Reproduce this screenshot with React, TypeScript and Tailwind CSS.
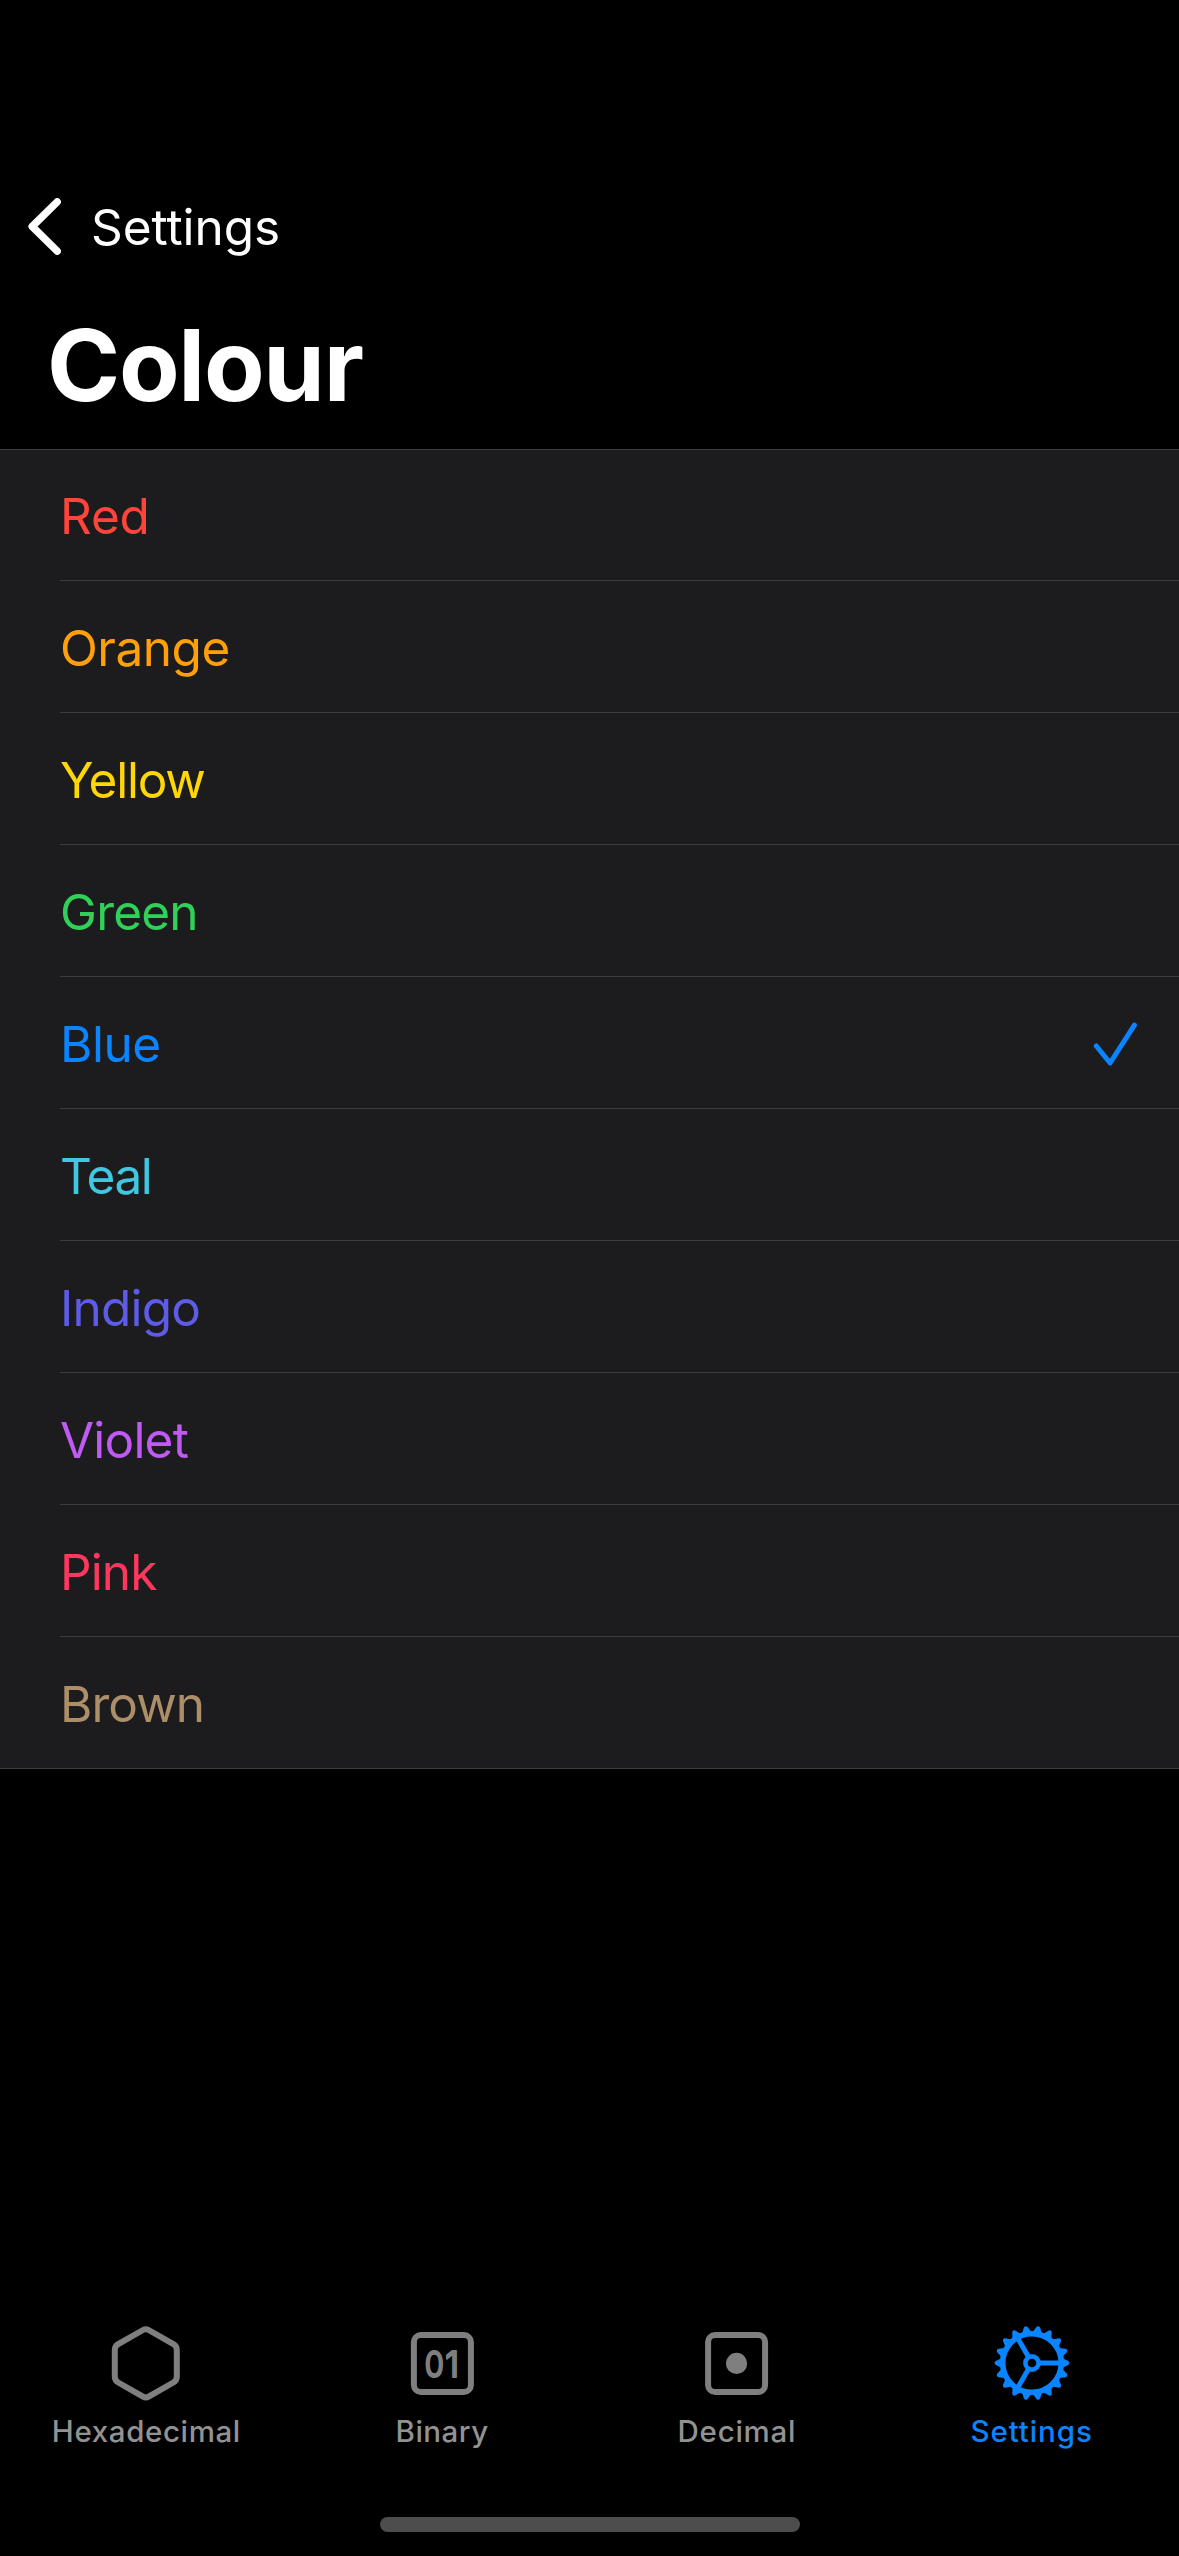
import type { ReactNode } from "react";
import clsx from "clsx";

const COLOURS = [
  { name: "Red", style: "text-[#ff453a] tracking-[-0.2px]" },
  { name: "Orange", style: "text-[#ff9f0a] tracking-[-0.5px]" },
  { name: "Yellow", style: "text-[#ffd60a] tracking-[-1.25px]" },
  { name: "Green", style: "text-[#30d158] tracking-[-0.8px]" },
  { name: "Blue", style: "text-[#0a84ff] tracking-[-0.5px]" },
  { name: "Teal", style: "text-[#40c8e0] tracking-[-1.5px]" },
  { name: "Indigo", style: "text-[#5e5ce6] tracking-[-0.8px]" },
  { name: "Violet", style: "text-[#bf5af2] tracking-[-0.8px]" },
  { name: "Pink", style: "text-[#ff375f] tracking-[-0.9px]" },
  { name: "Brown", style: "text-[#ac8e68] tracking-[-0.95px]" },
];

const SELECTED = "Blue";

function ChevronIcon() {
  return (
    <svg className="h-[57px] w-[33px]" viewBox="0 0 33 57" fill="none" stroke="currentColor" strokeWidth="7.4" strokeLinecap="round" strokeLinejoin="round">
      <path d="M29.2 3.8 4.2 28.5 29.2 53.2" />
    </svg>
  );
}

function CheckIcon() {
  return (
    <svg className="mt-2 h-[44px] w-[44px] text-[#0a84ff]" viewBox="0 0 44 44" fill="none" stroke="currentColor" strokeWidth="5" strokeLinecap="round" strokeLinejoin="round">
      <path d="M3.3 24 17.1 41 41.4 3.2" />
    </svg>
  );
}

function HexagonIcon() {
  return (
    <svg className="h-[76px] w-[76px]" viewBox="1.2 -0.3 76 76" fill="none" stroke="currentColor" strokeWidth="6">
      <path d="M40.8 4.7 65.6 18.8Q69 20.8 69 24.5V51.5Q69 55.2 65.6 57.2L40.8 71.3Q38 72.9 35.2 71.3L10.4 57.2Q7 55.2 7 51.5V24.5Q7 20.8 10.4 18.8L35.2 4.7Q38 3.1 40.8 4.7Z" />
    </svg>
  );
}

function BinaryIcon() {
  return (
    <svg className="h-[76px] w-[76px]" viewBox="0 0 76 76">
      <rect x="9.9" y="10" width="57" height="57" rx="7" fill="none" stroke="currentColor" strokeWidth="6" />
      <g className="font-['Inter',sans-serif] text-[36px] font-normal" fill="currentColor" stroke="currentColor" strokeWidth="1.8" strokeLinejoin="round">
        <text transform="translate(20.4 51.6) scale(0.86 1)">0</text>
        <text transform="translate(41.2 51.6) scale(0.94 1)">1</text>
      </g>
    </svg>
  );
}

function DecimalIcon() {
  return (
    <svg className="h-[76px] w-[76px]" viewBox="0 0 76 76">
      <rect x="9.1" y="10" width="57" height="57" rx="7" fill="none" stroke="currentColor" strokeWidth="6" />
      <circle cx="37.6" cy="38.4" r="10.6" fill="currentColor" />
    </svg>
  );
}

const TEETH = Array.from({ length: 18 }, (_, i) => i * 20);
const SPOKES = [0, 120, 240];

function GearIcon() {
  return (
    <svg className="h-[76px] w-[76px]" viewBox="-38 -38 76 76" fill="none" stroke="currentColor">
      <circle r="29.3" strokeWidth="5.6" />
      <circle r="6.6" strokeWidth="4.6" />
      {SPOKES.map((a) => (
        <path key={a} d="M7.5 0H28" strokeWidth="5" transform={`rotate(${a})`} />
      ))}
      {TEETH.map((a) => (
        <path key={a} d="M31-4.6 36.2-1.9Q37.4-1.2 37.4 0T36.2 1.9L31 4.6Z" fill="currentColor" stroke="none" transform={`rotate(${a})`} />
      ))}
    </svg>
  );
}

function Tab({ label, icon, labelStyle, active = false }: { label: string; icon: ReactNode; labelStyle: string; active?: boolean }) {
  return (
    <button className={clsx("flex flex-1 flex-col items-center", active ? "text-[#0a84ff]" : "text-[#7f7f7f]")}>
      {icon}
      <span className={clsx("mt-[12px] text-[29.5px] leading-[36px] font-medium", labelStyle, !active && "text-[#929292]")}>{label}</span>
    </button>
  );
}

export default function App() {
  return (
    <div className="flex h-[2556px] w-[1179px] flex-col bg-black font-['Inter',sans-serif] text-white">
      <header className="pt-[198px]">
        <button className="ml-[28px] flex h-[57px] items-center gap-[30px]">
          <ChevronIcon />
          <span className="mt-px text-[49.5px] leading-[60px] tracking-[-0.05px]">Settings</span>
        </button>
        <h1 className="mt-[50px] ml-[47px] text-[99px] leading-[120px] font-bold tracking-[-1.3px]">Colour</h1>
      </header>

      <ul className="mt-[24px] border-t border-[#3d3d41] bg-[#1c1c1e]">
        {COLOURS.map(({ name, style }, i) => {
          const last = i === COLOURS.length - 1;
          return (
            <li key={name} className={clsx("h-[132px] first:-mt-px", last ? "border-b border-[#3d3d41]" : "pl-[60px]")}>
              <div className={clsx("flex h-full items-start justify-between pt-[37px] pr-[42px]", last ? "pl-[60px]" : "border-b border-[#3d3d41]")}>
                <span className={clsx("text-[49.5px] leading-[60px]", style)}>{name}</span>
                {name === SELECTED && <CheckIcon />}
              </div>
            </li>
          );
        })}
      </ul>

      <nav className="mt-auto flex">
        <Tab label="Hexadecimal" labelStyle="-ml-0.5 tracking-[0.62px]" icon={<HexagonIcon />} />
        <Tab label="Binary" labelStyle="tracking-[0.5px]" icon={<BinaryIcon />} />
        <Tab label="Decimal" labelStyle="tracking-[0.75px]" icon={<DecimalIcon />} />
        <Tab label="Settings" labelStyle="tracking-[0.9px]" icon={<GearIcon />} active />
      </nav>
      <div className="mx-auto mt-[68px] mb-[24px] h-[15px] w-[420px] rounded-full bg-[#4d4d4d]" />
    </div>
  );
}
